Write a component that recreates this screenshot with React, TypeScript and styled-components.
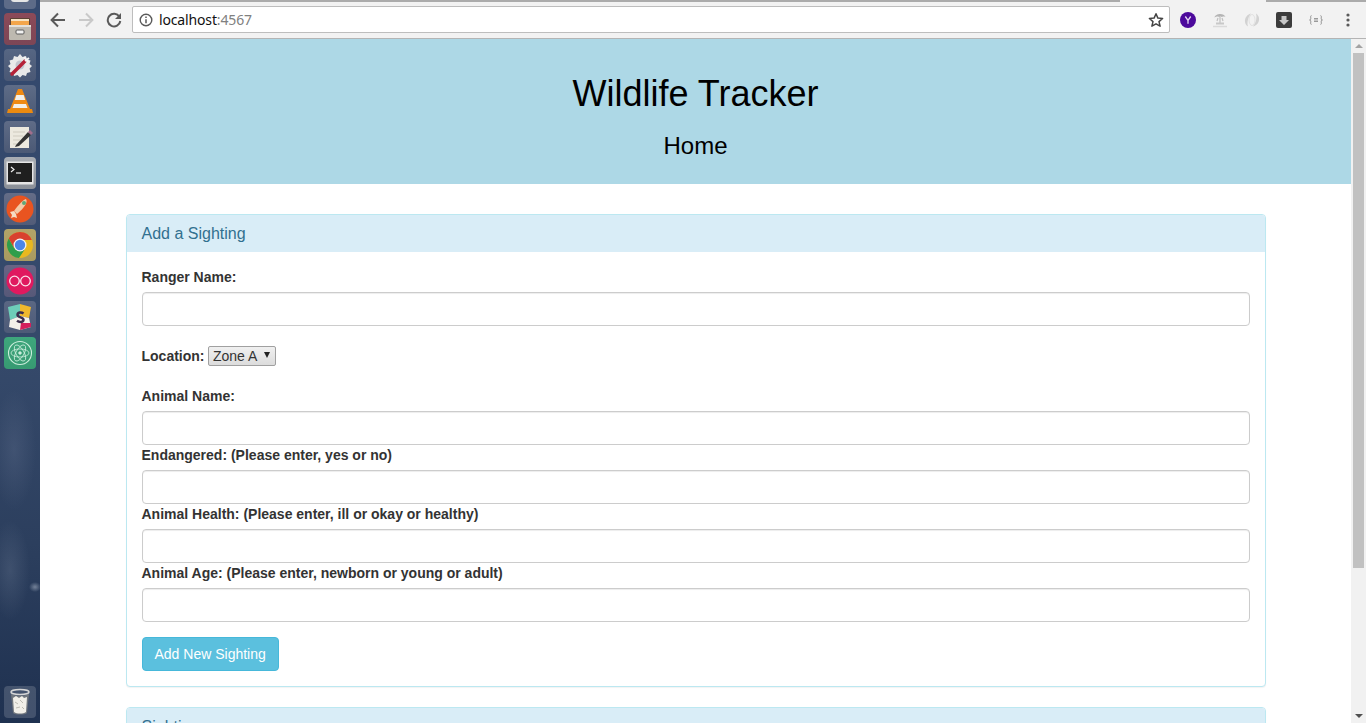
import React from "react";
import styled, { createGlobalStyle } from "styled-components";

const Global = createGlobalStyle`
  html, body { margin: 0; padding: 0; height: 100%; overflow: hidden; background: #fff; }
  * { box-sizing: border-box; }
  #root { height: 100%; }
`;

const Desktop = styled.div`
  display: flex;
  width: 100%;
  height: 723px;
  overflow: hidden;
  font-family: "Liberation Sans", Arial, sans-serif;
`;

const Launcher = styled.nav`
  flex: 0 0 40px;
  display: flex;
  flex-direction: column;
  align-items: center;
  gap: 4px;
  height: 723px;
  padding-bottom: 5px;
  overflow: hidden;
  background:
    radial-gradient(ellipse 6px 5px at 35px 587px, rgba(190, 200, 215, 0.5), transparent),
    radial-gradient(ellipse 20px 50px at 10px 570px, rgba(110, 125, 150, 0.3), transparent),
    radial-gradient(ellipse 22px 60px at 14px 450px, rgba(95, 110, 140, 0.35), transparent),
    linear-gradient(180deg, #34496e 0%, #35496a 50%, #2c3f5e 75%, #1f3150 100%);
`;

const Tile = styled.div<{ $bg: string }>`
  flex: 0 0 32px;
  width: 32px;
  display: flex;
  align-items: center;
  justify-content: center;
  border-radius: 4px;
  background: ${(p) => p.$bg};
  &:first-child { margin-top: -23px; }
  &:last-child { margin-top: auto; }
  svg { filter: blur(0.3px); }
`;

const Browser = styled.div`
  flex: 1;
  min-width: 0;
  display: flex;
  flex-direction: column;
`;

const TabStrip = styled.div`
  flex: 0 0 3px;
  display: flex;
  background: #f2f2f2;
`;

const TabEdge = styled.div<{ $w: number }>`
  flex: 0 0 ${(p) => p.$w}px;
  height: 2px;
  background: #ababab;
`;

const TabGap = styled.div`
  flex: 1;
`;

const Toolbar = styled.div`
  flex: 0 0 36px;
  display: flex;
  align-items: flex-start;
  padding: 3px 2px 0 4px;
  background: #f2f2f2;
  border-bottom: 1px solid #b4b4b4;
`;

const NavButton = styled.div`
  flex: 0 0 28px;
  height: 27px;
  display: flex;
  align-items: center;
  justify-content: center;
`;

const Omnibox = styled.div`
  flex: 1;
  height: 27px;
  margin-left: 4px;
  padding: 0 5px 0 6px;
  display: flex;
  align-items: center;
  background: #fff;
  border: 1px solid #bdbdbd;
  border-radius: 2px;
  font-family: "Noto Sans", "Open Sans", sans-serif;
  font-size: 14px;
  color: #111;
`;

const Url = styled.span`
  flex: 1;
  margin-left: 6px;
  letter-spacing: -0.15px;
`;

const Port = styled.span`
  color: #808080;
`;

const Extensions = styled.div`
  display: flex;
  margin-left: 2px;
`;

const ExtButton = styled.div`
  flex: 0 0 32px;
  height: 27px;
  display: flex;
  align-items: center;
  justify-content: center;
`;

const Viewport = styled.div`
  flex: 1;
  min-height: 0;
  display: flex;
`;

const Page = styled.main`
  flex: 1;
  min-width: 0;
  overflow: hidden;
  background: #fff;
  color: #333;
  font-size: 14px;
  line-height: 20px;
`;

const Scrollbar = styled.div`
  flex: 0 0 15px;
  display: flex;
  flex-direction: column;
  align-items: center;
  background: #f1f1f1;
`;

const ScrollArrow = styled.div<{ $down?: boolean }>`
  flex: 0 0 14px;
  display: flex;
  align-items: center;
  justify-content: center;
  &::before {
    content: "";
    border-left: 4px solid transparent;
    border-right: 4px solid transparent;
    ${(p) => (p.$down ? "border-top: 4px solid #505050;" : "border-bottom: 4px solid #a3a3a3;")}
  }
`;

const ScrollThumb = styled.div`
  flex: 0 0 515px;
  width: 11px;
  background: #c1c1c1;
`;

const ScrollTrack = styled.div`
  flex: 1;
`;

const Banner = styled.header`
  height: 145px;
  padding-top: 35px;
  margin-bottom: 30px;
  background: #add8e6;
  text-align: center;
  color: #000;
`;

const Title = styled.h1`
  margin: 0 0 19px;
  font-size: 36px;
  font-weight: 400;
  line-height: 40px;
`;

const Subtitle = styled.h3`
  margin: 0;
  font-size: 24px;
  font-weight: 400;
  line-height: 26px;
`;

const Container = styled.div`
  width: 1140px;
  margin: 0 auto;
`;

const Panel = styled.section`
  margin-bottom: 20px;
  background: #fff;
  border: 1px solid #bce8f1;
  border-radius: 4px;
  box-shadow: 0 1px 1px rgba(0, 0, 0, 0.05);
`;

const PanelHeading = styled.div`
  padding: 10px 15px;
  background: #d9edf7;
  border-radius: 3px 3px 0 0;
  color: #31708f;
`;

const PanelTitle = styled.h3`
  margin: 0;
  font-size: 16px;
  font-weight: 400;
  line-height: 17px;
`;

const PanelBody = styled.div`
  padding: 15px;
`;

const FieldGroup = styled.div<{ $tight?: boolean }>`
  margin-bottom: ${(p) => (p.$tight ? 0 : 15)}px;
`;

const InlineGroup = styled.div`
  display: flex;
  align-items: center;
  gap: 3.5px;
  height: 30px;
  margin-bottom: 15px;
`;

const FieldLabel = styled.label`
  display: block;
  margin-bottom: 5px;
  font-weight: 700;
`;

const InlineLabel = styled.label`
  font-weight: 700;
`;

const TextInput = styled.input`
  display: block;
  width: 100%;
  height: 34px;
  padding: 6px 12px;
  background: #fff;
  border: 1px solid #ccc;
  border-radius: 4px;
  box-shadow: inset 0 1px 1px rgba(0, 0, 0, 0.075);
  font: inherit;
  color: #555;
  outline: none;
`;

const SelectWrap = styled.span`
  position: relative;
  display: inline-block;
  width: 68px;
  height: 20px;
`;

const SelectBox = styled.select`
  appearance: none;
  -webkit-appearance: none;
  display: block;
  width: 100%;
  height: 100%;
  padding: 0 0 0 4px;
  border: 1px solid #a0a0a0;
  border-radius: 2px;
  background: linear-gradient(180deg, #f0f0f0, #dcdcdc);
  font-family: "Liberation Sans", Arial, sans-serif;
  font-size: 14px;
  line-height: 18px;
  color: #333;
`;

const SelectCaret = styled.span`
  position: absolute;
  top: 6px;
  right: 6px;
  border-left: 3.5px solid transparent;
  border-right: 3.5px solid transparent;
  border-top: 6px solid #222;
  pointer-events: none;
`;

const SubmitButton = styled.button`
  display: block;
  height: 34px;
  margin-top: 15px;
  padding: 6px 12px;
  background: #5bc0de;
  border: 1px solid #46b8da;
  border-radius: 4px;
  color: #fff;
  font: inherit;
`;

const BackIcon = () => (
  <svg width="16" height="16" viewBox="0 0 16 16" fill="none" stroke="#5a5a5a" strokeWidth="2">
    <path d="M15 8H2M8 1.5 1.6 8 8 14.500" />
  </svg>
);
const ForwardIcon = () => (
  <svg width="16" height="16" viewBox="0 0 16 16" fill="none" stroke="#c9c9c9" strokeWidth="2">
    <path d="M1 8h13M8 1.500 14.400 8 8 14.500" />
  </svg>
);
const ReloadIcon = () => (
  <svg width="16" height="16" viewBox="0 0 16 16" fill="none">
    <path d="M13.400 4.800A6.300 6.300 0 1 0 14.300 9" stroke="#5a5a5a" strokeWidth="2" />
    <path d="M15 1v6H9z" fill="#5a5a5a" />
  </svg>
);
const InfoIcon = () => (
  <svg width="14" height="14" viewBox="0 0 14 14" fill="none">
    <circle cx="7" cy="7" r="5.800" stroke="#5a5a5a" strokeWidth="1.400" />
    <path d="M7 6.200v4M7 3.600v1.500" stroke="#5a5a5a" strokeWidth="1.500" />
  </svg>
);
const StarIcon = () => (
  <svg width="16" height="16" viewBox="0 0 16 16" fill="none">
    <path d="M8 1.800l1.900 4.300 4.700.4-3.600 3.100 1.100 4.600L8 11.800l-4.100 2.400L5 9.600 1.400 6.500l4.700-.4z" stroke="#444" strokeWidth="1.500" strokeLinejoin="round" />
  </svg>
);
const YahooIcon = () => (
  <svg width="16" height="16" viewBox="0 0 16 16">
    <circle cx="8" cy="8" r="8" fill="#4d0a9c" />
    <path d="M5.300 4.500 8 8.300l2.700-3.800M8 8.300v3.400" fill="none" stroke="#e8dcf5" strokeWidth="1.300" />
  </svg>
);
const IslandIcon = () => (
  <svg width="16" height="16" viewBox="0 0 16 16" fill="none">
    <path d="M2.500 5.500C3 1.500 12 .5 13.500 5c-1.500-.7-2.500-.5-3.500 0-1-.7-2-.7-3 0-1.500-.7-3-.6-4.500.5z" fill="#b5b5b5" />
    <path d="M8 5v6M6 6l-1 3M10 6l1 3" stroke="#c0c0c0" strokeWidth="1.200" />
    <path d="M4 11.500h8" stroke="#c8c8c8" strokeWidth="2" />
    <path d="M1 14.500h14" stroke="#dadada" strokeWidth="1.500" />
  </svg>
);
const SwirlIcon = () => (
  <svg width="16" height="16" viewBox="0 0 16 16" fill="none">
    <path d="M7 1.500C3 2.500 .5 6 1 10c.3 2 1.500 3.500 3 4.500-1-3.500-.5-8.500 3-13z" fill="#d2d2d2" />
    <path d="M9 14.500c4-1 6.500-4.500 6-8.500-.3-2-1.500-3.500-3-4.500 1 3.500.5 8.500-3 13z" fill="#d2d2d2" />
    <ellipse cx="8" cy="8" rx="3" ry="5.500" stroke="#e2e2e2" />
  </svg>
);
const DownloadIcon = () => (
  <svg width="16" height="16" viewBox="0 0 16 16">
    <rect width="16" height="16" rx="2" fill="#3c3c3c" />
    <path d="M5.500 4h5v4H13l-5 5-5-5h2.500z" fill="#c6c6c6" />
  </svg>
);
const JsonIcon = () => (
  <svg width="14" height="10" viewBox="0 0 14 10" fill="none" stroke="#9a9a9a">
    <path d="M2.500.5C1 .5 2 3 1.800 4 1.700 4.700 1.300 5 .5 5c.8 0 1.200.3 1.300 1 .2 1-.8 3.500.7 3.500M11.500.5c1.500 0 .5 2.500.7 3.500.1.700.5 1 1.300 1-.8 0-1.200.3-1.300 1-.2 1 .8 3.500-.7 3.500M5 3.500h4M5 5h4M5 6.500h4" />
  </svg>
);
const MenuDots = () => (
  <svg width="4" height="14" viewBox="0 0 4 14" fill="#5a5a5a">
    <circle cx="2" cy="2" r="1.600" />
    <circle cx="2" cy="7" r="1.600" />
    <circle cx="2" cy="12" r="1.600" />
  </svg>
);

const HomeAppIcon = () => (
  <svg width="24" height="24" viewBox="0 0 24 24">
    <rect x="3" y="3" width="18" height="18" rx="3" fill="#e6e6e6" />
  </svg>
);
const FilesIcon = () => (
  <svg width="26" height="26" viewBox="0 0 26 26">
    <rect x="3" y="2" width="20" height="10" rx="1" fill="#5c4333" />
    <rect x="4" y="4" width="18" height="5" fill="#f3a64b" />
    <rect x="4" y="3" width="18" height="2" fill="#f7e4c3" />
    <rect x="2" y="9" width="22" height="15" rx="1" fill="#bdb9b0" />
    <rect x="2" y="9" width="22" height="2" fill="#e4e1da" />
    <rect x="9" y="14" width="8" height="4" rx="1" fill="#f2f2f2" stroke="#5c5c5c" />
  </svg>
);
const SettingsIcon = () => (
  <svg width="26" height="26" viewBox="0 0 26 26">
    <path d="M13 2l2.500 3 3.500-1 1 3.500 3.500 1-1 3.500 2.500 2-2.500 2.500 1 3.500-3.500 1-1 3-3.500-1-2.500 2.500-2.500-2.500-3.500 1-1-3-3.500-1 1-3.500L1 14l2.500-2-1-3.500 3.500-1 1-3.500 3.500 1z" fill="#e9e9e9" />
    <circle cx="13" cy="13" r="4.500" fill="#c2c6cf" />
    <path d="M5 22 18 9" stroke="#b52238" strokeWidth="3.500" strokeLinecap="round" />
    <path d="M18 9l4-3M17 5l4 5" stroke="#f5f5f5" strokeWidth="2" />
  </svg>
);
const VlcIcon = () => (
  <svg width="26" height="28" viewBox="0 0 26 28">
    <path d="M11 2h4l8 20H3z" fill="#f08a12" />
    <path d="M9.300 8h7.400l1.500 5H7.800z" fill="#f2f0ea" />
    <path d="M1 22h24l1 4H0z" fill="#ea8a10" />
    <path d="M7 17h12l1.500 4h-15z" fill="#f4efe6" />
  </svg>
);
const EditorIcon = () => (
  <svg width="26" height="26" viewBox="0 0 26 26">
    <rect x="3" y="3" width="19" height="21" fill="#ece9df" />
    <path d="M6 8h12M6 12h10M6 16h7M6 20h6" stroke="#cfcbbf" />
    <path d="M9 21 21 8l3 3-12 11-4 1z" fill="#333" />
    <path d="M21 8l2-2 3 3-2 2z" fill="#a06e8c" />
  </svg>
);
const TerminalIcon = () => (
  <svg width="28" height="24" viewBox="0 0 28 24">
    <rect x="0.500" y="0.500" width="27" height="23" fill="#e6e6e6" />
    <rect x="2" y="2" width="24" height="19" fill="#1f1f1f" />
    <path d="M5 6l3 2.500L5 11" fill="none" stroke="#eee" strokeWidth="1.200" />
    <path d="M10 12h5" stroke="#eee" strokeWidth="1.200" />
  </svg>
);
const RocketIcon = () => (
  <svg width="28" height="28" viewBox="0 0 28 28">
    <circle cx="14" cy="14" r="13.500" fill="#e95420" />
    <path d="M20 4c2 3-1 8-9 15l-3-3C13 9 17 5 20 4z" fill="#f3c9a6" />
    <path d="M8 16l-4 1 2 3-1 3 3-1 3 1-1-4z" fill="#f5dcc2" />
    <circle cx="18" cy="8" r="2" fill="#5fa777" />
  </svg>
);
const ChromeIcon = () => (
  <svg width="28" height="28" viewBox="0 0 28 28">
    <circle cx="14" cy="14" r="13" fill="#e8b820" />
    <path d="M14 1A13 13 0 0 0 2.700 7.500L8 17l6-8h11.800A13 13 0 0 0 14 1z" fill="#d8402f" />
    <path d="M2.700 7.500A13 13 0 0 0 13 27l6-9-5 1-6-2z" fill="#2f9e4b" />
    <circle cx="14" cy="14" r="6.500" fill="#f2f2f2" />
    <circle cx="14" cy="14" r="5.200" fill="#4a86e8" />
  </svg>
);
const FlickrIcon = () => (
  <svg width="28" height="28" viewBox="0 0 28 28">
    <circle cx="14" cy="14" r="13.500" fill="#e0195f" />
    <circle cx="8.500" cy="14" r="4.800" fill="none" stroke="#fbe4ec" strokeWidth="1.300" />
    <circle cx="19.500" cy="14" r="4.800" fill="none" stroke="#fbe4ec" strokeWidth="1.300" />
  </svg>
);
const SlackIcon = () => (
  <svg width="26" height="28" viewBox="0 0 26 28">
    <path d="M1 4 13 1v12L3 17z" fill="#6dcdb8" />
    <path d="M13 1l11 3-2 11-9-2z" fill="#efb82c" />
    <path d="M3 17l10-4 9 2 2 9-11 3-11-3z" fill="#f4f1ea" />
    <path d="M14 20l10 0v4l-11 3z" fill="#d41f5c" />
    <path d="M16.500 10.500c-2.500-2-6-1-6 1.300 0 3.200 6 2 6 5 0 2.400-3.800 3-6.500 1" fill="none" stroke="#3c2e4d" strokeWidth="2.500" />
  </svg>
);
const AtomIcon = () => (
  <svg width="28" height="28" viewBox="0 0 28 28" fill="none" stroke="#cdeedd" strokeWidth="0.800">
    <circle cx="14" cy="14" r="11.500" strokeWidth="1.100" />
    <ellipse cx="14" cy="14" rx="9" ry="4" />
    <ellipse cx="14" cy="14" rx="9" ry="4" transform="rotate(60 14 14)" />
    <ellipse cx="14" cy="14" rx="9" ry="4" transform="rotate(120 14 14)" />
    <circle cx="14" cy="14" r="1.300" fill="#cdeedd" />
  </svg>
);
const TrashIcon = () => (
  <svg width="24" height="28" viewBox="0 0 24 28">
    <ellipse cx="12" cy="4" rx="9" ry="2.500" fill="none" stroke="#d5d5d5" strokeWidth="1.500" />
    <path d="M3 6l2 19c2 2 12 2 14 0l2-19c-4 2-14 2-18 0z" fill="#8e8e88" opacity="0.6" />
    <path d="M5 10l3-2 3 2 3-2 2 2 3-1-1 15c-3 2-9 2-12 0z" fill="#f1efe8" />
    <path d="M7 14l3 2M12 12l3 3M8 20l4-1M14 19l2 2" stroke="#bdbbb2" />
  </svg>
);

const dockApps: { bg: string; icon: React.ReactNode }[] = [
  { bg: "#5d6b88", icon: <HomeAppIcon /> },
  { bg: "linear-gradient(#8c4a58, #7c4656)", icon: <FilesIcon /> },
  { bg: "linear-gradient(#566683, #4a5875)", icon: <SettingsIcon /> },
  { bg: "linear-gradient(#5e6c87, #4b5975)", icon: <VlcIcon /> },
  { bg: "linear-gradient(#5f6c87, #4b5975)", icon: <EditorIcon /> },
  { bg: "linear-gradient(#a9adb3, #8a8f97)", icon: <TerminalIcon /> },
  { bg: "linear-gradient(#646d87, #525c78)", icon: <RocketIcon /> },
  { bg: "linear-gradient(#b3a468, #a89a60)", icon: <ChromeIcon /> },
  { bg: "linear-gradient(#676585, #565878)", icon: <FlickrIcon /> },
  { bg: "linear-gradient(#5a6783, #4d5a77)", icon: <SlackIcon /> },
  { bg: "linear-gradient(#3ea67c, #379a72)", icon: <AtomIcon /> },
  { bg: "rgba(255, 255, 255, 0.16)", icon: <TrashIcon /> },
];

const extensionIcons = [
  <YahooIcon key="y" />,
  <IslandIcon key="i" />,
  <SwirlIcon key="s" />,
  <DownloadIcon key="d" />,
  <JsonIcon key="j" />,
  <MenuDots key="m" />,
];

const promptFields = [
  "Endangered: (Please enter, yes or no)",
  "Animal Health: (Please enter, ill or okay or healthy)",
  "Animal Age: (Please enter, newborn or young or adult)",
];

export default function App() {
  return (
    <Desktop>
      <Global />
      <Launcher>
        {dockApps.map((app, i) => (
          <Tile key={i} $bg={app.bg}>
            {app.icon}
          </Tile>
        ))}
      </Launcher>
      <Browser>
        <TabStrip>
          <TabEdge $w={1080} />
          <TabGap />
          <TabEdge $w={100} />
        </TabStrip>
        <Toolbar>
          <NavButton><BackIcon /></NavButton>
          <NavButton><ForwardIcon /></NavButton>
          <NavButton><ReloadIcon /></NavButton>
          <Omnibox>
            <InfoIcon />
            <Url>
              localhost<Port>:4567</Port>
            </Url>
            <StarIcon />
          </Omnibox>
          <Extensions>
            {extensionIcons.map((icon) => (
              <ExtButton key={icon.key}>{icon}</ExtButton>
            ))}
          </Extensions>
        </Toolbar>
        <Viewport>
          <Page>
            <Banner>
              <Title>Wildlife Tracker</Title>
              <Subtitle>Home</Subtitle>
            </Banner>
            <Container>
              <Panel>
                <PanelHeading>
                  <PanelTitle>Add a Sighting</PanelTitle>
                </PanelHeading>
                <PanelBody>
                  <FieldGroup>
                    <FieldLabel>Ranger Name:</FieldLabel>
                    <TextInput type="text" />
                  </FieldGroup>
                  <InlineGroup>
                    <InlineLabel>Location:</InlineLabel>
                    <SelectWrap>
                      <SelectBox defaultValue="Zone A">
                        <option>Zone A</option>
                        <option>Zone B</option>
                        <option>Zone C</option>
                      </SelectBox>
                      <SelectCaret />
                    </SelectWrap>
                  </InlineGroup>
                  <FieldGroup $tight>
                    <FieldLabel>Animal Name:</FieldLabel>
                    <TextInput type="text" />
                  </FieldGroup>
                  {promptFields.map((label) => (
                    <FieldGroup $tight key={label}>
                      <FieldLabel>{label}</FieldLabel>
                      <TextInput type="text" />
                    </FieldGroup>
                  ))}
                  <SubmitButton type="button">Add New Sighting</SubmitButton>
                </PanelBody>
              </Panel>
              <Panel>
                <PanelHeading>
                  <PanelTitle>Sightings</PanelTitle>
                </PanelHeading>
              </Panel>
            </Container>
          </Page>
          <Scrollbar>
            <ScrollArrow />
            <ScrollThumb />
            <ScrollTrack />
            <ScrollArrow $down />
          </Scrollbar>
        </Viewport>
      </Browser>
    </Desktop>
  );
}
